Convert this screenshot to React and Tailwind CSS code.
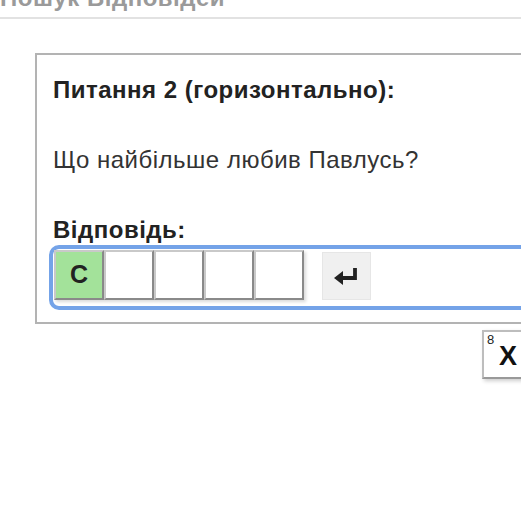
import React from "react";

const CELLS = ["С", "", "", "", ""];

function EnterIcon() {
  return (
    <svg width="27" height="21" viewBox="0 0 27 21">
      <path d="M22 2 V12 H8" fill="none" stroke="#222" strokeWidth="3.8" />
      <path d="M1 12 L10 5 V19 Z" fill="#222" />
    </svg>
  );
}

export default function App() {
  return (
    <div className="w-[521px] h-[520px] bg-white overflow-hidden relative" style={{ fontFamily: '"Liberation Sans", Arial, sans-serif' }}>
      {/* heading of the previous block, scrolled off the top */}
      <div className="h-[19px] border-b-2 border-[#e2e2e2] overflow-hidden">
        <div className="-mt-[20px] text-[24px] font-bold text-[#9a9a9a] whitespace-nowrap tracking-[0.5px]">Пошук Відповідей</div>
      </div>

      <div className="ml-[35px] mt-[34px] w-[520px] h-[271px] border-2 border-[#b3b3b3] pl-[16px] pt-[21px]">
        <div className="text-[24px] font-bold text-[#222] leading-[28px] tracking-[0.5px]">Питання 2 (горизонтально):</div>
        <div className="mt-[42px] text-[24px] text-[#333] leading-[28px] tracking-[0.5px]">Що найбільше любив Павлусь?</div>
        <div className="mt-[42px] text-[24px] font-bold text-[#222] leading-[28px] tracking-[0.5px]">Відповідь:</div>
        <div className="-ml-[4px] mt-[1px] h-[65px] border-4 border-[#74a3e8] rounded-[10px] flex items-start pt-[1px] pl-[1px]">
          <div className="flex">
            {CELLS.map((c, i) => (
              <div
                key={i}
                className={`w-[50px] h-[50px] border-2 border-t-[#c9c9c9] border-l-[#c9c9c9] border-r-[#8a8a8a] border-b-[#8a8a8a] shadow-[2px_2px_3px_rgba(0,0,0,0.15)] flex items-center justify-center text-[25px] font-bold text-[#222] ${c ? "bg-[#a3e29a]" : "bg-white"}`}
              >
                {c}
              </div>
            ))}
          </div>
          <div className="ml-[18px] mt-[2px] w-[49px] h-[48px] bg-[#f0f0f0] border border-[#e6e6e6] flex items-center justify-center">
            <EnterIcon />
          </div>
        </div>
      </div>

      <div className="absolute left-[482px] top-[330px] w-[50px] h-[49px] border-2 border-t-[#bdbdbd] border-l-[#bdbdbd] border-r-[#999] border-b-[#999] bg-white shadow-[2px_2px_4px_rgba(0,0,0,0.2)]">
        <span className="absolute left-[3px] top-[1px] text-[13px] leading-[14px] text-[#222]">8</span>
        <span className="absolute left-[15px] top-[9px] text-[27px] leading-[30px] font-bold text-[#111]">Х</span>
      </div>
    </div>
  );
}
